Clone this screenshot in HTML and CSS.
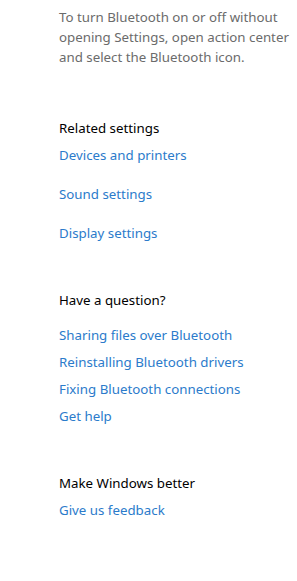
FILE: index.html
```html
<!DOCTYPE html>
<html lang="en">
<head>
    <meta charset="UTF-8">
    <meta name="viewport" content="width=device-width, initial-scale=1.0">
    <title>Bluetooth settings</title>
    <link rel="stylesheet" href="styles.css">
</head>
<body>
    <div class="panel">
        <p class="note">To turn Bluetooth on or off without opening Settings, open action center and select the Bluetooth icon.</p>

        <section class="group group-related">
            <h2 class="group-title">Related settings</h2>
            <a class="link" href="#">Devices and printers</a>
            <a class="link" href="#">Sound settings</a>
            <a class="link" href="#">Display settings</a>
        </section>

        <section class="group group-question">
            <h2 class="group-title">Have a question?</h2>
            <a class="link" href="#">Sharing files over Bluetooth</a>
            <a class="link" href="#">Reinstalling Bluetooth drivers</a>
            <a class="link" href="#">Fixing Bluetooth connections</a>
            <a class="link" href="#">Get help</a>
        </section>

        <section class="group group-feedback">
            <h2 class="group-title">Make Windows better</h2>
            <a class="link" href="#">Give us feedback</a>
        </section>
    </div>
</body>
</html>
```

FILE: styles.css
```css
* {
    margin: 0;
    padding: 0;
    box-sizing: border-box;
}

body {
    background-color: #ffffff;
    font-family: 'Noto Sans', 'Open Sans', sans-serif;
    font-size: 13.3px;
    line-height: 20px;
    color: #000000;
}

.panel {
    display: flex;
    flex-direction: column;
    padding: 7px 0 0 59px;
}

.note {
    color: #6b6b6b;
    width: 238px;
}

.group {
    display: flex;
    flex-direction: column;
    align-items: flex-start;
    margin-top: 51px;
}

.group-question,
.group-feedback {
    margin-top: 47px;
}

.group-title {
    font-size: inherit;
    font-weight: 400;
    color: #000000;
}

.link {
    color: #2b7bcb;
    text-decoration: none;
}

.group-related .link {
    margin-top: 19px;
}

.group-related .group-title + .link {
    margin-top: 7px;
}

.group-question .link {
    margin-top: 7px;
}

.group-question .group-title + .link {
    margin-top: 15px;
}

.group-feedback .link {
    margin-top: 7px;
}
```
